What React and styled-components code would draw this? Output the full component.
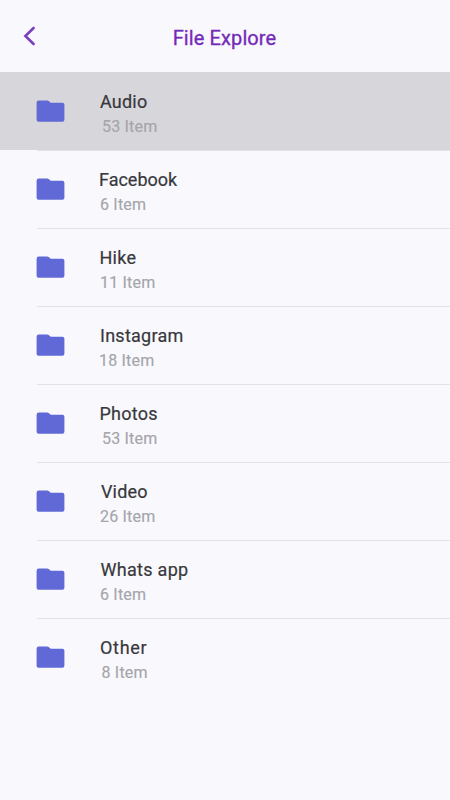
import React from 'react'
import styled, { createGlobalStyle } from 'styled-components'

const folders = [
	{ name: 'Audio', count: 53, selected: true, countIndent: 2, nameSpacing: 0.2 },
	{ name: 'Facebook', count: 6, nameIndent: -1 },
	{ name: 'Hike', count: 11, nameIndent: -0.5, nameSpacing: 0.25 },
	{ name: 'Instagram', count: 18, countIndent: -1, nameSpacing: 0.25 },
	{ name: 'Photos', count: 53, countIndent: 2, nameIndent: -0.5, nameSpacing: 0.25 },
	{ name: 'Video', count: 26, nameIndent: 1, nameSpacing: 0.15 },
	{ name: 'Whats app', count: 6, nameIndent: 0.5, nameSpacing: 0.3 },
	{ name: 'Other', count: 8, countIndent: 1.5, nameSpacing: 0.7 },
]

const FolderIcon = () => (
	<svg width='29' height='24' viewBox='0 0 29 24'>
		<path
			d='M2.8 1.5H11.2Q12 1.5 12.6 2.1L14.8 3.8H26.4Q28.4 3.8 28.4 5.8V20.8Q28.4 22.8 26.4 22.8H2.6Q0.6 22.8 0.6 20.8V3.7Q0.6 1.5 2.8 1.5Z'
			fill='#6169d6'
		/>
	</svg>
)

const App = () => (
	<Screen>
		<GlobalStyle />
		<Header>
			<BackButton aria-label='Back'>
				<svg width='14' height='22' viewBox='0 0 14 22'>
					<path d='M10.6 3L2.4 11L10.6 19' fill='none' stroke='#7a40bd' strokeWidth='2.6' strokeLinecap='round' />
				</svg>
			</BackButton>
			<Title>File Explore</Title>
		</Header>
		<FolderList>
			{folders.map(folder => (
				<FolderRow key={folder.name} $selected={folder.selected}>
					<FolderIcon />
					<FolderText>
						<FolderName $indent={folder.nameIndent} $spacing={folder.nameSpacing}>{folder.name}</FolderName>
						<FolderCount $indent={folder.countIndent}>{folder.count} Item</FolderCount>
					</FolderText>
				</FolderRow>
			))}
		</FolderList>
	</Screen>
)

export default App;

const GlobalStyle = createGlobalStyle`
  body {
    margin: 0;
    background: #f8f8fd;
    font-family: Roboto, 'Noto Sans', sans-serif;
  }
`

const Screen = styled.div`
  min-height: 800px;
  background: #f8f8fd;
`

const Header = styled.header`
  display: grid;
  grid-template-columns: 60px 1fr 60px;
  align-items: center;
  height: 72px;
`

const BackButton = styled.button`
  display: flex;
  padding: 0 0 0 23px;
  border: none;
  background: none;
`

const Title = styled.h1`
  margin: 0;
  padding: 3px 1px 0 0;
  color: #7429b8;
  font-size: 20px;
  font-weight: 400;
  line-height: 28px;
  letter-spacing: 0.1px;
  text-align: center;
  white-space: nowrap;
  -webkit-text-stroke: 0.3px;
`

const FolderList = styled.ul`
  margin: 0;
  padding: 0;
  list-style: none;
`

const FolderRow = styled.li`
  display: flex;
  align-items: center;
  box-sizing: border-box;
  height: 78px;
  padding-left: 36px;
  background: ${props => props.$selected ? '#d7d6da' : 'linear-gradient(#e3e3e8, #e3e3e8) 37px 0 / 100% 1px no-repeat'};
`

const FolderText = styled.div`
  display: flex;
  flex-direction: column;
  margin-left: 35px;
  padding-top: 6px;
`

const FolderName = styled.span`
  margin-left: ${props => props.$indent || 0}px;
  color: #38383c;
  font-size: 18px;
  font-weight: 400;
  line-height: 26px;
  letter-spacing: ${props => props.$spacing || 0}px;
  -webkit-text-stroke: 0.2px;
`

const FolderCount = styled.span`
  margin-left: ${props => props.$indent || 0}px;
  color: #a5a5aa;
  font-size: 16px;
  font-weight: 400;
  line-height: 24px;
  letter-spacing: 0.2px;
  -webkit-text-stroke: 0.15px;
`
